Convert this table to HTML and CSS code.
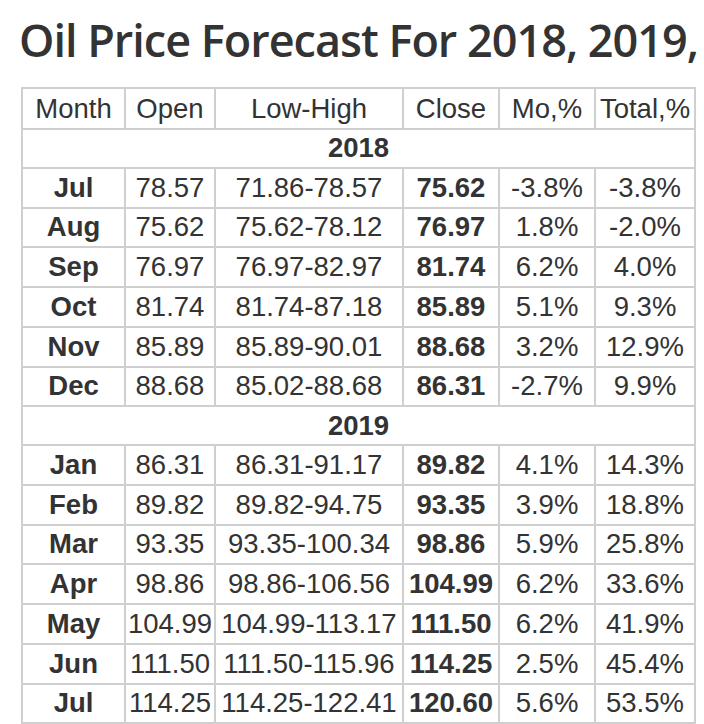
FILE: index.html
```html
<!DOCTYPE html>
<html lang="en">
<head>
<meta charset="utf-8">
<title>Oil Price Forecast</title>
<link rel="stylesheet" href="styles.css">
</head>
<body>
<div class="page">
  <h1 class="title">Oil Price Forecast For 2018, 2019,</h1>
  <table class="forecast">
    <colgroup>
      <col class="c-month"><col class="c-open"><col class="c-range"><col class="c-close"><col class="c-mo"><col class="c-total">
    </colgroup>
    <thead>
      <tr class="head"><th>Month</th><th>Open</th><th>Low-High</th><th>Close</th><th>Mo,%</th><th>Total,%</th></tr>
    </thead>
    <tbody>
      <tr class="year"><td colspan="6">2018</td></tr>
      <tr class="row"><td class="m">Jul</td><td>78.57</td><td>71.86-78.57</td><td class="cl">75.62</td><td>-3.8%</td><td>-3.8%</td></tr>
      <tr class="row"><td class="m">Aug</td><td>75.62</td><td>75.62-78.12</td><td class="cl">76.97</td><td>1.8%</td><td>-2.0%</td></tr>
      <tr class="row"><td class="m">Sep</td><td>76.97</td><td>76.97-82.97</td><td class="cl">81.74</td><td>6.2%</td><td>4.0%</td></tr>
      <tr class="row"><td class="m">Oct</td><td>81.74</td><td>81.74-87.18</td><td class="cl">85.89</td><td>5.1%</td><td>9.3%</td></tr>
      <tr class="row"><td class="m">Nov</td><td>85.89</td><td>85.89-90.01</td><td class="cl">88.68</td><td>3.2%</td><td>12.9%</td></tr>
      <tr class="row"><td class="m">Dec</td><td>88.68</td><td>85.02-88.68</td><td class="cl">86.31</td><td>-2.7%</td><td>9.9%</td></tr>
      <tr class="year"><td colspan="6">2019</td></tr>
      <tr class="row"><td class="m">Jan</td><td>86.31</td><td>86.31-91.17</td><td class="cl">89.82</td><td>4.1%</td><td>14.3%</td></tr>
      <tr class="row"><td class="m">Feb</td><td>89.82</td><td>89.82-94.75</td><td class="cl">93.35</td><td>3.9%</td><td>18.8%</td></tr>
      <tr class="row"><td class="m">Mar</td><td>93.35</td><td>93.35-100.34</td><td class="cl">98.86</td><td>5.9%</td><td>25.8%</td></tr>
      <tr class="row"><td class="m">Apr</td><td>98.86</td><td>98.86-106.56</td><td class="cl">104.99</td><td>6.2%</td><td>33.6%</td></tr>
      <tr class="row"><td class="m">May</td><td>104.99</td><td>104.99-113.17</td><td class="cl">111.50</td><td>6.2%</td><td>41.9%</td></tr>
      <tr class="row"><td class="m">Jun</td><td>111.50</td><td>111.50-115.96</td><td class="cl">114.25</td><td>2.5%</td><td>45.4%</td></tr>
      <tr class="row"><td class="m">Jul</td><td>114.25</td><td>114.25-122.41</td><td class="cl">120.60</td><td>5.6%</td><td>53.5%</td></tr>
    </tbody>
  </table>
</div>
</body>
</html>
```

FILE: styles.css
```css
html, body {
  margin: 0;
  padding: 0;
  background: #ffffff;
}

.page {
  padding: 9.5px 8px 0 21px;
}

.title {
  margin: 0 0 17.5px -2px;
  font-family: "Open Sans", sans-serif;
  font-weight: 600;
  font-size: 45px;
  line-height: 60px;
  color: #333333;
  white-space: nowrap;
  letter-spacing: -1px;
}

.forecast {
  width: 675px;
  table-layout: fixed;
  border-collapse: separate;
  border-spacing: 0;
  border-top: 2px solid #cfcfcf;
  border-left: 2px solid #cfcfcf;
  font-family: "Liberation Sans", Arial, sans-serif;
  font-size: 27.5px;
  color: #333333;
}

.c-month { width: 103px; }
.c-open { width: 90px; }
.c-range { width: 188px; }
.c-close { width: 96px; }
.c-mo { width: 96px; }
.c-total { width: 100px; }

.forecast th,
.forecast td {
  padding: 0;
  border-right: 2px solid #cfcfcf;
  border-bottom: 2px solid #cfcfcf;
  text-align: center;
  vertical-align: middle;
  font-weight: normal;
  white-space: nowrap;
  overflow: hidden;
  box-sizing: border-box;
}

.head { height: 41px; }
.year { height: 38.8px; }
.row { height: 39.75px; }

.year td { font-weight: bold; }
.forecast td.m { font-weight: bold; }
.forecast td.cl { font-weight: bold; }
```
